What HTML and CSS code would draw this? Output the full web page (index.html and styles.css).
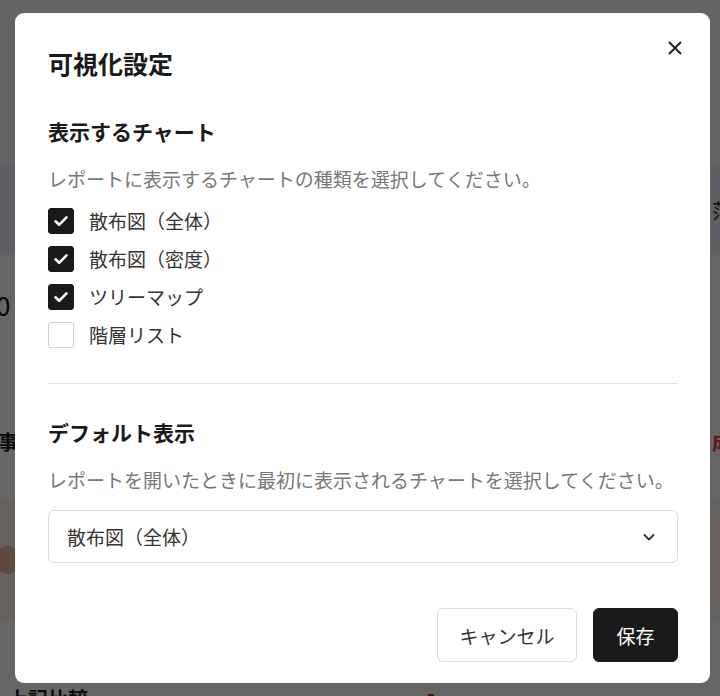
FILE: index.html
```html
<!DOCTYPE html>
<html lang="ja">
<head>
<meta charset="utf-8">
<title>可視化設定</title>
<link rel="stylesheet" href="styles.css">
</head>
<body>
<div class="page">
  <div class="band band-head"></div>
  <div class="band band-blue"><span class="bg-text"></span><span class="bg-text">范</span></div>
  <div class="band band-num"><span class="bg-num">0</span></div>
  <div class="band band-cap"><span class="bg-text bold">事</span><span class="bg-text red">成</span></div>
  <div class="band band-gap"></div>
  <div class="band band-pink"><span class="bg-dot"></span></div>
  <div class="band band-space"></div>
  <div class="band band-foot"><span class="bg-text bold">上記比較</span><span class="bg-mark"></span></div>
</div>

<div class="overlay">
  <div class="modal" role="dialog" aria-labelledby="dlg-title">
    <button class="close" aria-label="閉じる">
      <svg viewBox="0 0 24 24" width="24" height="24"><path d="M6.5 6.5l11 11M17.5 6.5l-11 11" fill="none" stroke="#222" stroke-width="2" stroke-linecap="round"/></svg>
    </button>
    <h1 class="title" id="dlg-title">可視化設定</h1>

    <section class="section">
      <h2 class="heading">表示するチャート</h2>
      <p class="desc">レポートに表示するチャートの種類を選択してください。</p>
      <ul class="checks">
        <li class="check-row"><span class="box checked"><svg viewBox="0 0 26 26" width="26" height="26"><path d="M7.5 13.3l3.6 3.5 7.4-7.4" fill="none" stroke="#fff" stroke-width="2.6" stroke-linecap="round" stroke-linejoin="round"/></svg></span><span class="label">散布図（全体）</span></li>
        <li class="check-row"><span class="box checked"><svg viewBox="0 0 26 26" width="26" height="26"><path d="M7.5 13.3l3.6 3.5 7.4-7.4" fill="none" stroke="#fff" stroke-width="2.6" stroke-linecap="round" stroke-linejoin="round"/></svg></span><span class="label">散布図（密度）</span></li>
        <li class="check-row"><span class="box checked"><svg viewBox="0 0 26 26" width="26" height="26"><path d="M7.5 13.3l3.6 3.5 7.4-7.4" fill="none" stroke="#fff" stroke-width="2.6" stroke-linecap="round" stroke-linejoin="round"/></svg></span><span class="label">ツリーマップ</span></li>
        <li class="check-row"><span class="box"></span><span class="label">階層リスト</span></li>
      </ul>
    </section>

    <hr class="divider">

    <section class="section second">
      <h2 class="heading">デフォルト表示</h2>
      <p class="desc">レポートを開いたときに最初に表示されるチャートを選択してください。</p>
      <div class="select">
        <span class="select-value">散布図（全体）</span>
        <svg class="chev" viewBox="0 0 14 14" width="14" height="14"><path d="M2.5 5l4.5 4.5L11.5 5" fill="none" stroke="#333" stroke-width="1.8" stroke-linecap="round" stroke-linejoin="round"/></svg>
      </div>
    </section>

    <div class="actions">
      <button class="btn btn-cancel">キャンセル</button>
      <button class="btn btn-save">保存</button>
    </div>
  </div>
</div>
</body>
</html>
```

FILE: styles.css
```css
* { box-sizing: border-box; }

html, body {
  margin: 0;
  padding: 0;
  height: 100%;
  overflow: hidden;
}

body {
  font-family: "Noto Sans CJK JP", "Noto Sans", sans-serif;
  background: #fff;
  color: #1a1a1a;
}

/* background page */
.page {
  display: flex;
  flex-direction: column;
}
.band {
  display: flex;
  justify-content: space-between;
  align-items: center;
}
.band-head { height: 165px; background: #fafafa; }
.band-blue { height: 90px; background: #eef1f7; padding: 0 0 0 712px; }
.band-num { height: 125px; align-items: flex-start; padding-top: 31px; }
.bg-num { font-size: 26px; line-height: 38px; color: #111; margin-left: -4px; }
.band-cap { height: 100px; padding-top: 22px; }
.band-gap { height: 20px; }
.band-pink { height: 120px; background: #fdf4f1; }
.bg-dot {
  width: 28px; height: 28px; border-radius: 50%;
  background: #f1b9a0; margin-left: -6px;
}
.band-space { height: 60px; }
.band-foot { height: 30px; padding: 6px 0 0 10px; justify-content: flex-start; }
.bg-text { font-size: 20px; color: #222; }
.bg-text.bold { font-weight: 700; margin-left: -2px; }
.bg-text.red { color: #e83a3a; font-weight: 700; margin-right: -12px; }
.bg-mark { width: 6px; height: 8px; background: #d42020; margin-left: 340px; }

/* overlay + dialog */
.overlay {
  position: fixed;
  inset: 0;
  background: rgba(0, 0, 0, 0.6);
  padding: 13px 10px 0 15px;
}

.modal {
  position: relative;
  background: #fff;
  border-radius: 9px;
  padding: 32px 32px 21px 33px;
}

.close {
  position: absolute;
  top: 23px;
  right: 23px;
  width: 24px;
  height: 24px;
  padding: 0;
  border: 0;
  background: none;
  display: flex;
  cursor: pointer;
}

.title {
  margin: 0;
  font-size: 25px;
  line-height: 36px;
  font-weight: 700;
  color: #1a1a1a;
}

.section { margin-top: 35px; }

.heading {
  margin: 0;
  font-size: 21px;
  line-height: 30px;
  font-weight: 700;
  color: #1a1a1a;
}

.desc {
  margin: 19px 0 0;
  font-size: 19px;
  line-height: 28px;
  color: #777;
}

.checks {
  list-style: none;
  margin: 15px 0 0;
  padding: 0;
  display: flex;
  flex-direction: column;
  gap: 12px;
}

.check-row {
  display: flex;
  align-items: center;
  gap: 15px;
  height: 26px;
}

.box {
  width: 26px;
  height: 26px;
  border-radius: 3px;
  border: 1px solid #cfcfcf;
  background: #fff;
  display: flex;
  flex: none;
}
.box.checked {
  background: #1a1a1a;
  border-color: #1a1a1a;
}
.box.checked svg { margin: -1px; }

.label {
  font-size: 19px;
  line-height: 26px;
  color: #333;
}

.divider {
  margin: 35px 0 0;
  border: 0;
  height: 1px;
  background: #e3e3e3;
}

.second { margin-top: 33px; }

.select {
  margin-top: 16px;
  height: 53px;
  border: 1px solid #dcdcdc;
  border-radius: 6px;
  display: flex;
  align-items: center;
  justify-content: space-between;
  padding: 0 21px 0 18px;
}
.select-value {
  font-size: 19px;
  color: #333;
}

.actions {
  margin-top: 45px;
  display: flex;
  justify-content: flex-end;
  gap: 16px;
}

.btn {
  height: 54px;
  border-radius: 6px;
  font-family: inherit;
  font-size: 19px;
  padding: 0;
  white-space: nowrap;
  cursor: pointer;
}
.btn-cancel {
  width: 140px;
  background: #fff;
  border: 1px solid #dcdcdc;
  color: #333;
}
.btn-save {
  width: 85px;
  background: #1a1a1a;
  border: 1px solid #1a1a1a;
  color: #fff;
}
```
